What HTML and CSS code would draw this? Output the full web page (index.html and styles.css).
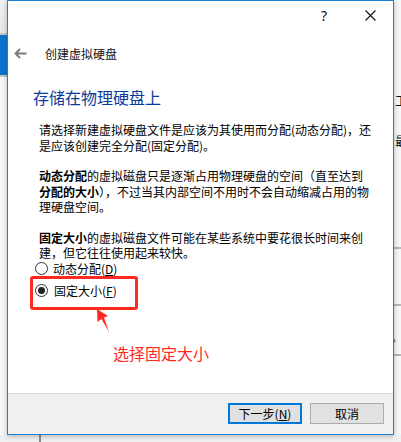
FILE: index.html
```html
<!DOCTYPE html>
<html lang="zh-CN">
<head>
<meta charset="utf-8">
<title>创建虚拟硬盘</title>
<link rel="stylesheet" href="styles.css">
</head>
<body>
<div class="screen">
  <div class="bg-left">
    <div class="bl-top"></div>
    <div class="bl-line"></div>
    <div class="bl-blue"></div>
    <div class="bl-line"></div>
    <div class="bl-rest"></div>
  </div>

  <div class="dialog">
    <div class="titlebar">
      <span class="cap help">?</span>
      <span class="cap close">
        <svg width="11" height="11" viewBox="0 0 11 11"><path d="M0.5 0.5 L10.5 10.5 M10.5 0.5 L0.5 10.5" stroke="#111" stroke-width="1.1" fill="none"/></svg>
      </span>
    </div>

    <div class="header">
      <svg class="back" width="13" height="11" viewBox="0 0 13 11"><path d="M12.5 5.5 H1.5 M6 1 L1.5 5.5 L6 10" stroke="#7a7a7a" stroke-width="1.8" fill="none"/></svg>
      <span class="wtitle">创建虚拟硬盘</span>
    </div>

    <div class="page">
      <h1 class="heading">存储在物理硬盘上</h1>
      <p class="para">请选择新建虚拟硬盘文件是应该为其使用而分配(动态分配)，还<br>是应该创建完全分配(固定分配)。</p>
      <p class="para"><b>动态分配</b>的虚拟磁盘只是逐渐占用物理硬盘的空间（直至达到<br><b>分配的大小</b>），不过当其内部空间不用时不会自动缩减占用的物<br>理硬盘空间。</p>
      <p class="para"><b>固定大小</b>的虚拟磁盘文件可能在某些系统中要花很长时间来创<br>建，但它往往使用起来较快。</p>

      <div class="radios">
        <label class="radio"><span class="circle"></span><span class="rlabel">动态分配(<u>D</u>)</span></label>
        <label class="radio checked"><span class="circle"><span class="dot"></span></span><span class="rlabel">固定大小(<u>F</u>)</span></label>
        <div class="mark-box"></div>
        <svg class="mark-arrow" width="18" height="26" viewBox="0 0 18 26"><polygon points="3,1 3.5,14 7.5,11 15,24 10,9.5 14,8" fill="#ff2a1f"/></svg>
      </div>

      <div class="mark-text">选择固定大小</div>
    </div>

    <div class="footer">
      <button class="btn default">下一步(<u>N</u>)</button>
      <button class="btn">取消</button>
    </div>
  </div>

  <div class="bg-right">
    <div class="frag f1">工具</div>
    <div class="frag f2">最</div>
    <div class="rline l1"></div>
    <div class="rline l2"></div>
    <div class="frag f3">。</div>
    <div class="rline l3"></div>
  </div>

  <div class="bg-bottom"><div class="vline"></div></div>
</div>
</body>
</html>
```

FILE: styles.css
```css
* { box-sizing: border-box; }
html, body { margin: 0; padding: 0; }
body {
  width: 401px;
  height: 442px;
  overflow: hidden;
  background: #f0f0f0;
  font-family: "Noto Sans CJK SC", "Microsoft YaHei", sans-serif;
  font-size: 12px;
  color: #000;
}

.screen {
  display: grid;
  grid-template-columns: 7px 387px 7px;
  grid-template-rows: 435px 7px;
  width: 401px;
  height: 442px;
}

/* background windows */
.bg-left {
  grid-row: 1;
  grid-column: 1;
  display: flex;
  flex-direction: column;
  background: #f6f6f6;
}
.bl-top { height: 33px; background: linear-gradient(#f2f2f2, #e6e6e6); }
.bl-line { height: 2px; background: #c6c6c6; }
.bl-blue { height: 40px; background: linear-gradient(90deg, #0a72cc, #0b7bd6); }
.bl-rest { flex: 1; background: #f7f7f7; }

.bg-right {
  grid-row: 1;
  grid-column: 3;
  background: #f7f7f7;
  overflow: hidden;
  display: flex;
  flex-direction: column;
}
.frag { font-size: 12px; line-height: 14px; color: #111; white-space: nowrap; padding-left: 1px; }
.f1 { margin-top: 94px; }
.f2 { margin-top: 26px; }
.rline { height: 2px; background: #b8b8b8; }
.l1 { margin-top: 99px; }
.l2 { margin-top: 55px; }
.f3 { margin-top: 24px; margin-left: -4px; }
.l3 { margin-top: 10px; }

.bg-bottom {
  grid-row: 2;
  grid-column: 1 / -1;
  background: #f0f0f0;
}
.vline { margin-left: 39px; width: 2px; height: 100%; background: #8c8c8c; }

/* dialog */
.dialog {
  grid-row: 1;
  grid-column: 2;
  border: 1px solid #1a82d6;
  background: #fff;
  display: flex;
  flex-direction: column;
  box-shadow: 0 1px 5px rgba(0, 0, 0, 0.28);
  position: relative;
  z-index: 1;
}

.titlebar {
  height: 30px;
  display: flex;
  justify-content: flex-end;
}
.cap {
  width: 46px;
  height: 30px;
  display: flex;
  align-items: center;
  justify-content: center;
}
.help {
  font-family: "Segoe UI", "Noto Sans", sans-serif;
  font-size: 14px;
  color: #111;
  padding-bottom: 1px;
}
.close svg { display: block; margin-top: -1px; }

.header {
  height: 44px;
  display: flex;
  align-items: center;
  padding-left: 6px;
}
.back { display: block; margin-right: 18px; }
.wtitle { font-size: 12px; color: #111; }

.page {
  flex: 1;
  padding-left: 25px;
  display: flex;
  flex-direction: column;
}
.heading {
  margin: 12px 0 0;
  font-size: 16px;
  line-height: 20px;
  font-weight: normal;
  color: #0a3a9e;
}
.para {
  margin: 15px 0 0 6px;
  line-height: 15.5px;
  font-size: 12px;
  white-space: nowrap;
}
.para b { font-weight: 700; }

.radios {
  position: relative;
  margin: 0 0 0 2px;
  display: flex;
  flex-direction: column;
  gap: 6px;
  padding-top: 0;
}
.radio {
  height: 16px;
  display: flex;
  align-items: center;
  gap: 5px;
  font-size: 12px;
}
.circle {
  width: 13px;
  height: 13px;
  border: 1px solid #333;
  border-radius: 50%;
  background: #fff;
  display: flex;
  align-items: center;
  justify-content: center;
}
.dot { width: 7px; height: 7px; border-radius: 50%; background: #222; }
.rlabel { font-size: 12px; }
.radio.checked .rlabel { margin-left: 1px; }

.mark-box {
  position: absolute;
  left: -5px;
  top: 15px;
  width: 108px;
  height: 34px;
  border: 3px solid #ff2a1f;
  border-radius: 3px;
}
.mark-arrow {
  position: absolute;
  left: 59px;
  top: 47px;
}

.mark-text {
  margin: 44px 0 0 80px;
  font-size: 16px;
  line-height: 20px;
  color: #ff2a1f;
}

.footer {
  height: 41px;
  border-top: 1px solid #dcdcdc;
  background: #f0f0f0;
  display: flex;
  justify-content: flex-end;
  align-items: flex-start;
  gap: 8px;
  padding: 9px 9px 0 0;
}
.btn {
  width: 74px;
  height: 21px;
  background: #e1e1e1;
  border: 1px solid #adadad;
  font-family: "Noto Sans CJK SC", sans-serif;
  font-size: 12px;
  line-height: 1;
  color: #000;
  padding: 0;
  display: flex;
  align-items: center;
  justify-content: center;
}
.btn.default { border: 2px solid #0078d7; }
```
